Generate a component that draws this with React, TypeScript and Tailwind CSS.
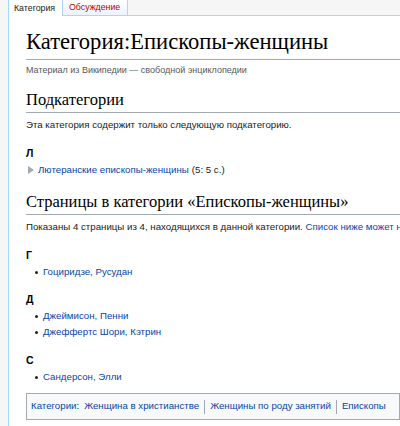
import React from 'react';

const sans = { fontFamily: '"Liberation Sans", Arial, sans-serif' };
const serif = { fontFamily: '"Liberation Serif", "Times New Roman", serif' };

function Section({ letter, items, top }: { letter: string; items: string[]; top: string }) {
  return (
    <div className={top}>
      <h3 className="text-[10.5px] font-bold leading-[14px] text-black">{letter}</h3>
      <ul className="mt-[2px]">
        {items.map((it) => (
          <li key={it} className="flex items-center leading-[16px]">
            <span className="ml-[9px] mr-[5px] inline-block h-[3px] w-[3px] rounded-full bg-[#202122]" />
            <a className="text-[#0645ad]">{it}</a>
          </li>
        ))}
      </ul>
    </div>
  );
}

export default function App() {
  return (
    <div
      className="h-[426px] w-[400px] overflow-hidden whitespace-nowrap bg-[#f6f6f6] pl-[8px] text-[9.7px] text-[#202122]"
      style={sans}
    >
      <div className="flex h-[16px] border-l border-[#a7d7f9]">
        <div className="w-[53px] bg-white pl-[5px] text-[8.8px] leading-[16px] text-[#222]">Категория</div>
        <div className="w-[66px] border-x border-b border-[#a7d7f9] bg-gradient-to-b from-white to-[#eaf3ff] pl-[6px] text-[8.8px] leading-[15px] text-[#ba0000]">
          Обсуждение
        </div>
        <div className="flex-1 border-b border-[#a7d7f9]" />
      </div>

      <div className="h-full border-l border-[#a7d7f9] bg-white pl-[17px]">
        <h1
          className="border-b border-[#a2a9b1] pb-[3px] pt-[12px] text-[22.6px] leading-[28px] text-black"
          style={serif}
        >
          Категория:Епископы-женщины
        </h1>
        <div className="mt-[4px] text-[9px] leading-[12px] text-[#54595d]">
          Материал из Википедии — свободной энциклопедии
        </div>

        <h2 className="mt-[12px] border-b border-[#a2a9b1] text-[16.5px] leading-[24px] text-black" style={serif}>
          Подкатегории
        </h2>
        <p className="mt-[5px] leading-[14px]">Эта категория содержит только следующую подкатегорию.</p>

        <div className="mt-[14px]">
          <h3 className="text-[10.5px] font-bold leading-[14px] text-black">Л</h3>
          <div className="mt-[2px] flex items-center leading-[16px]">
            <svg width="6" height="8" viewBox="0 0 6 8" className="ml-[2px] mr-[4px]">
              <path d="M0 0 L6 4 L0 8 Z" fill="#a2a9b1" />
            </svg>
            <a className="text-[#0645ad]">Лютеранские епископы-женщины</a>
            <span className="ml-[3px]">(5: 5 с.)</span>
          </div>
        </div>

        <h2 className="mt-[12px] border-b border-[#a2a9b1] text-[16.5px] leading-[24px] text-black" style={serif}>
          Страницы в категории «Епископы-женщины»
        </h2>
        <p className="mt-[5px] leading-[14px]">
          Показаны 4 страницы из 4, находящихся в данной категории.{' '}
          <a className="text-[#0645ad]">Список ниже может не отражать последних изменений.</a>
        </p>

        <Section top="mt-[14px]" letter="Г" items={['Гоциридзе, Русудан']} />
        <Section top="mt-[12px]" letter="Д" items={['Джеймисон, Пенни', 'Джеффертс Шори, Кэтрин']} />
        <Section top="mt-[13px]" letter="С" items={['Сандерсон, Элли']} />

        <div className="mt-[8px] flex h-[27px] items-center border border-[#a2a9b1] bg-[#f8f9fa] pl-[4px]">
          <a className="text-[#0645ad]">Категории</a>
          <span className="mr-[5px]">:</span>
          <a className="text-[#0645ad]">Женщина в христианстве</a>
          <span className="mx-[5px] h-[14px] w-px bg-[#a2a9b1]" />
          <a className="text-[#0645ad]">Женщины по роду занятий</a>
          <span className="mx-[5px] h-[14px] w-px bg-[#a2a9b1]" />
          <a className="text-[#0645ad]">Епископы</a>
        </div>
      </div>
    </div>
  );
}
